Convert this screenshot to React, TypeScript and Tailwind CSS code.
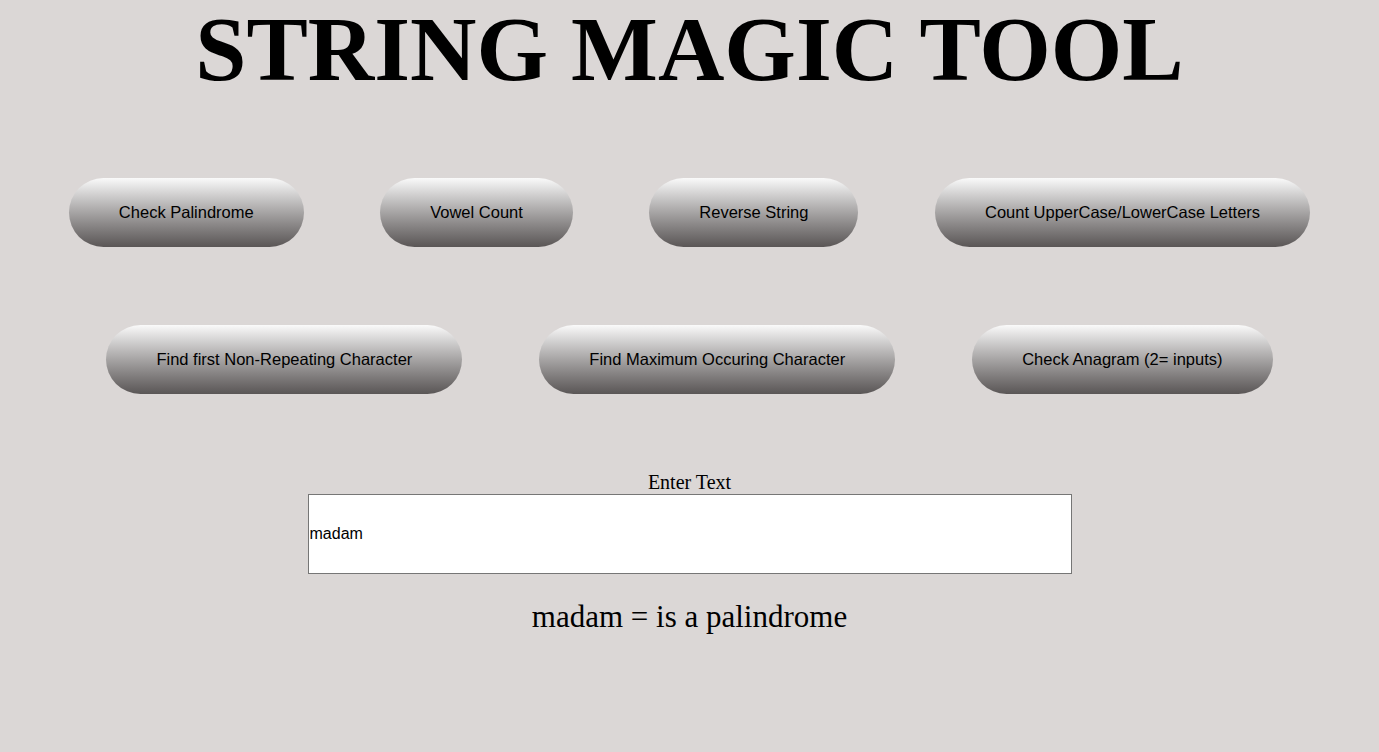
const firstRow = ['Check Palindrome', 'Vowel Count', 'Reverse String', 'Count UpperCase/LowerCase Letters'];
const secondRow = ['Find first Non-Repeating Character', 'Find Maximum Occuring Character', 'Check Anagram (2= inputs)'];

function PillButton({ label }: { label: string }) {
  return (
    <button className="h-[69px] px-[50px] rounded-[35px] bg-gradient-to-b from-[#fafafa] to-[#5a5656] text-[16.5px] text-black font-['Liberation_Sans',Arial,sans-serif]">
      {label}
    </button>
  );
}

export default function App() {
  return (
    <div className="min-h-screen bg-[#dbd7d6] font-['Liberation_Serif','Times_New_Roman',serif] text-black">
      <h1 className="text-center text-[92px] font-bold leading-none pt-[3px] h-[106px]">STRING MAGIC TOOL</h1>

      <div className="mt-[72px] flex justify-center gap-[76.5px]">
        {firstRow.map(l => <PillButton key={l} label={l} />)}
      </div>
      <div className="mt-[78px] flex justify-center gap-[77px]">
        {secondRow.map(l => <PillButton key={l} label={l} />)}
      </div>

      <div className="mt-[76px] flex flex-col items-center">
        <label className="text-[20px] leading-[24px]">Enter Text</label>
        <input
          defaultValue="madam"
          className="w-[764px] h-[80px] bg-white border border-[#767676] px-[1px] text-[16px] font-['Liberation_Sans',Arial,sans-serif] outline-none"
        />
        <p className="mt-[23px] text-[31px] leading-[40px]">madam = is a palindrome</p>
      </div>
    </div>
  );
}
